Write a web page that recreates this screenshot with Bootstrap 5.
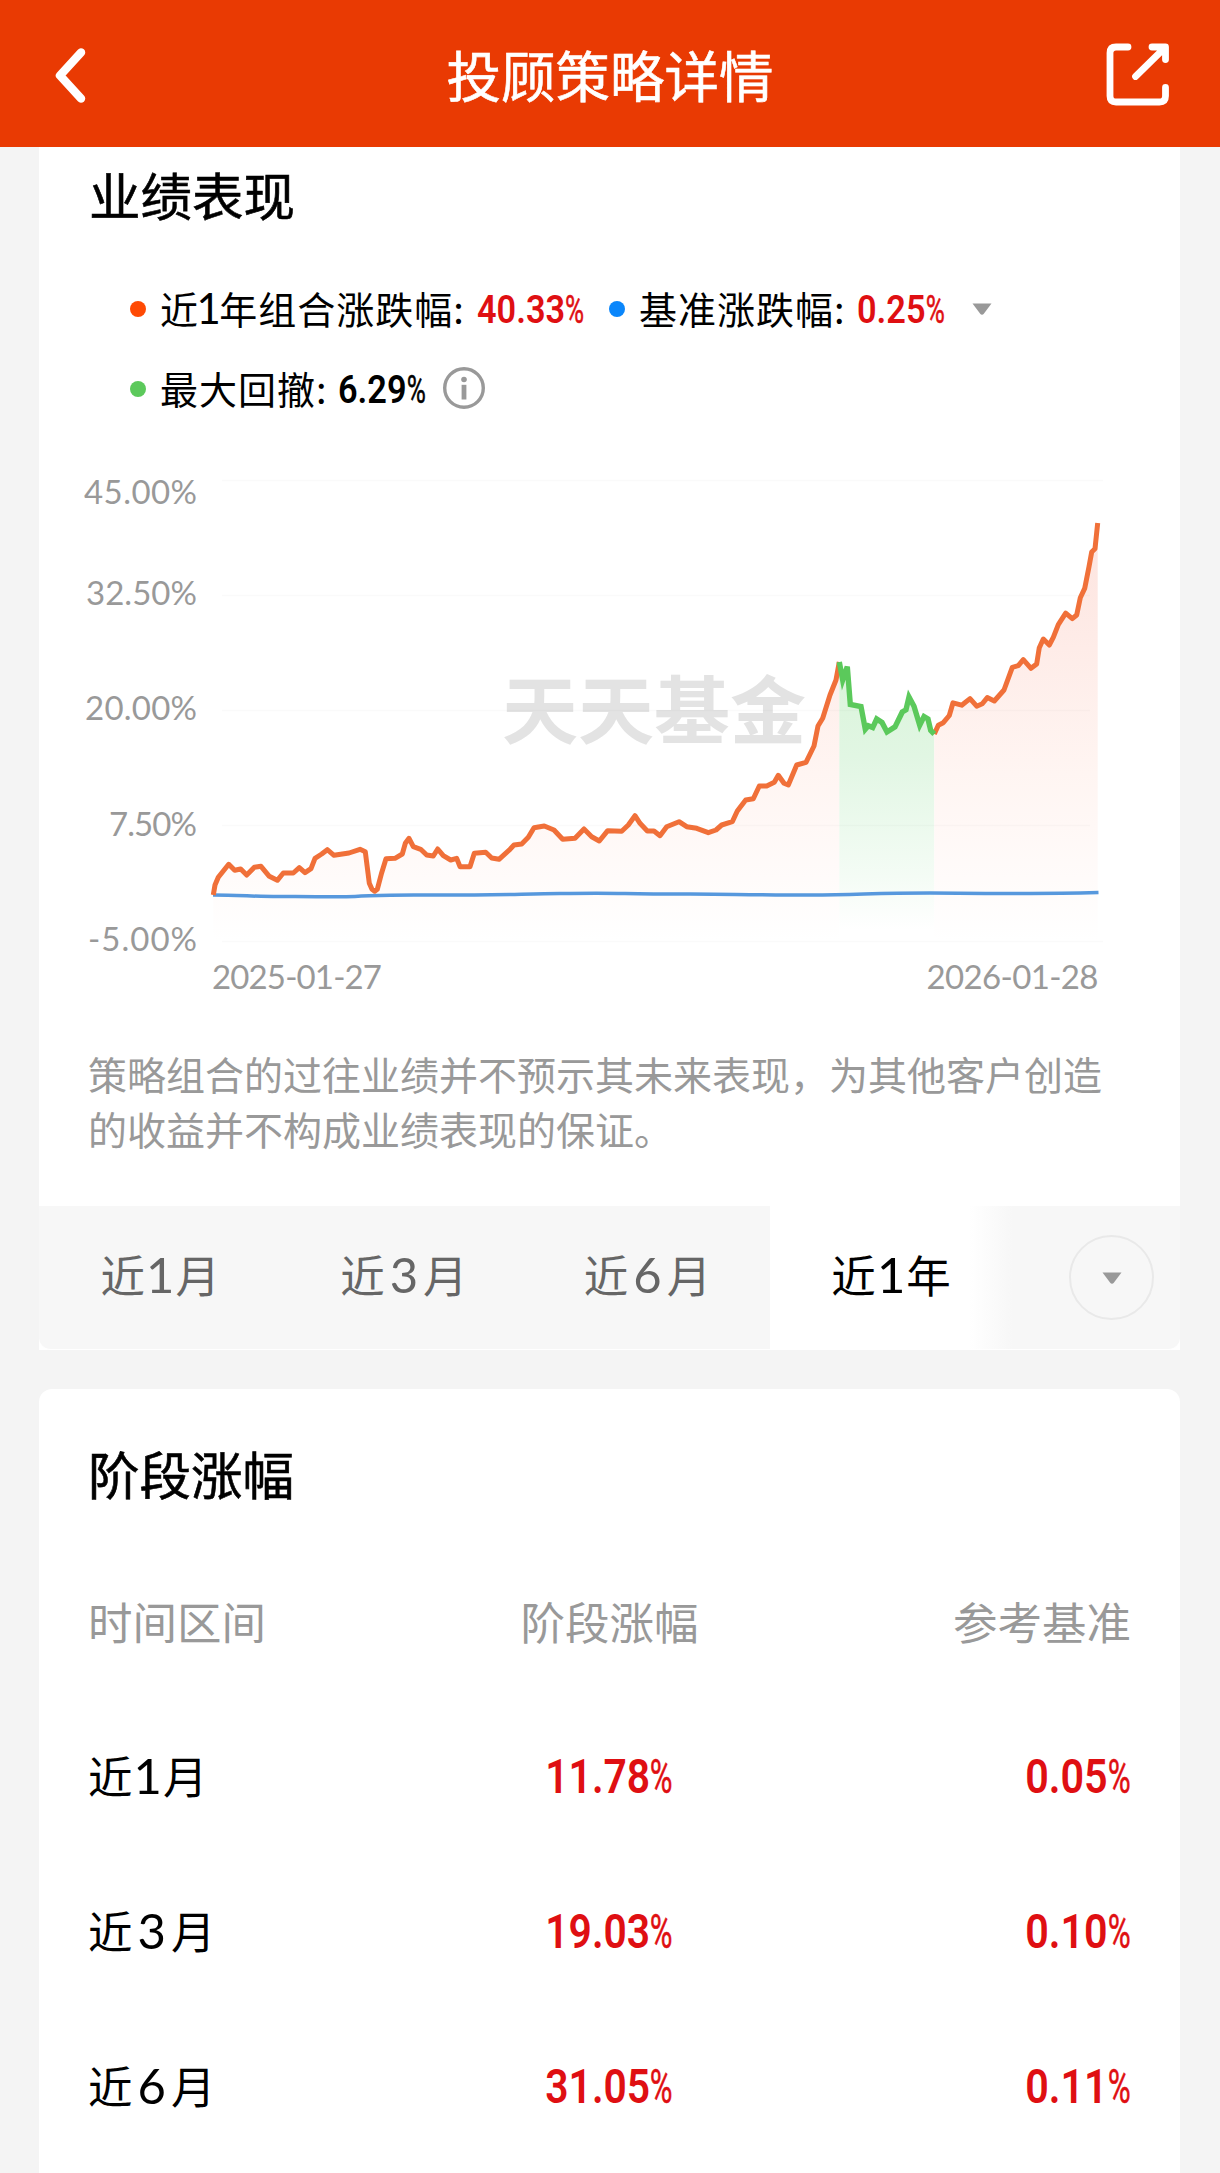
<!DOCTYPE html>
<html lang="zh-CN">
<head>
<meta charset="utf-8">
<meta name="viewport" content="width=device-width, initial-scale=1">
<title>投顾策略详情</title>
<link href="https://cdn.jsdelivr.net/npm/bootstrap@5.3.0/dist/css/bootstrap.min.css" rel="stylesheet">
<style>
body{background:#f4f4f4;color:#000;font-family:"Noto Sans CJK SC",sans-serif;width:1220px;height:2173px;overflow:hidden}
.topbar{height:147px;background:#e93a03;color:#fff;padding:0 50px 0 52px}
.topbar h1{font-size:54.5px;font-weight:400;line-height:60px;margin:0 0 0 4px;-webkit-text-stroke:.6px #fff}
.panel{margin:0 40px 0 39px;background:#fff;width:1141px}
.sect{font-size:51.5px;font-weight:400;line-height:60px;margin:0;-webkit-text-stroke:.6px #000}
.legend-row{height:80px;padding-left:91px;font-size:38px;line-height:50px;white-space:nowrap}
.dot{width:16px;height:16px;border-radius:50%;flex:none}
.lab{margin:-3px 1px 0 14px;letter-spacing:1px;flex:none}
.lab .one{padding:0;margin:0 -2.5px 0 -2.5px}
.num{font-family:Roboto,sans-serif;font-weight:600;color:#df0f12;display:inline-block;white-space:nowrap;flex:none}
.num .pct{font-weight:400;display:inline-block;transform:scaleX(.76);transform-origin:left;margin-right:-.17em;-webkit-text-stroke:.5px currentColor}
.legend-row .num{font-size:39px;transform:scaleX(.88);transform-origin:left;line-height:50px;padding-top:2px}
.note{font-size:39px;line-height:55px;color:#999;padding:0 38px 0 49px;height:160px;margin:-3px 0 0;white-space:nowrap}
.tabs{height:144px;background:#f7f7f7;border-bottom:1px solid #fff;border-radius:0 0 12px 12px;color:#666;font-size:44.5px;overflow:hidden}
.tabs .tab{width:243.6px;height:144px;flex:none;padding:0 1px 7px 0}
.tabs .tab.active{color:#000;background:linear-gradient(90deg,#fff 82%,#f7f7f7)}
.wide,.one{font-family:Lato,"Noto Sans CJK SC",sans-serif;font-size:1.1em;line-height:1}
.wide{padding:0 5px 0 5px}
.one{padding:0 1px 0 1px}
.more{width:85px;height:85px;border:2px solid #e9e9e9;border-radius:50%;margin-left:56px}
.stages{margin-top:39px;border-radius:13px 13px 0 0;height:786px;padding:54px 49px 0}
.grid-head{font-size:44.5px;color:#999;height:66px;margin-top:85px}
.grid-line{height:155px;font-size:44.5px}
.term{padding-bottom:1px}
.grid-line .num{font-size:48px;padding-top:3px}
.mid .num{transform:scaleX(.85)}
.end .num{transform:scaleX(.86);transform-origin:right}
.ax{font-family:Lato,sans-serif;font-size:33px;fill:#999}
</style>
<script src="https://cdn.jsdelivr.net/npm/bootstrap@5.3.0/dist/js/bootstrap.bundle.min.js"></script>
</head>
<body>
<header class="topbar d-flex align-items-center justify-content-between">
  <svg width="60" height="60" viewBox="52 44 60 60" fill="none" stroke="#fff" stroke-width="8.5" stroke-linecap="round" stroke-linejoin="round"><path d="M81 52.500 60 75.500 81 98.500"/></svg>
  <h1>投顾策略详情</h1>
  <svg width="66" height="66" viewBox="1104 42 66 66" fill="none" stroke="#fff" stroke-width="6.800" stroke-linecap="round" stroke-linejoin="round"><path d="M1128 48H1116Q1110 48 1110 54V97Q1110 103 1116 103H1159.500Q1165.500 103 1165.500 97V88.500M1152 48H1165.500V60.500M1135.500 77.500 1164 49.500"/></svg>
</header>

<main>
<section class="panel">
  <div style="height:122px;padding:17px 0 0 50px"><h2 class="sect">业绩表现</h2></div>
  <div class="legend-row d-flex align-items-center">
    <span class="dot" style="background:#ff4a04"></span><span class="lab" style="width:316px">近<span class="one">1</span>年组合涨跌幅:</span><span class="num" style="width:132px">40.33<span class="pct">%</span></span>
    <span class="dot" style="background:#0a86fb"></span><span class="lab" style="width:217px">基准涨跌幅:</span><span class="num" style="width:114px">0.25<span class="pct">%</span></span>
    <svg width="22" height="14" viewBox="0 0 22 14"><path d="M1.500 1.500H20.500L13 11.500Q11 14 9 11.500Z" fill="#999"/></svg>
  </div>
  <div class="legend-row d-flex align-items-center">
    <span class="dot" style="background:#5cc95b"></span><span class="lab" style="width:177px">最大回撤:</span><span class="num text-black" style="width:104px">6.29<span class="pct">%</span></span>
    <svg width="44" height="44" viewBox="0 1 44 44"><circle cx="22" cy="22" r="19.300" fill="none" stroke="#999" stroke-width="3.400"/><circle cx="22" cy="13.500" r="2.800" fill="#999"/><path d="M22 18.800V33.500" stroke="#999" stroke-width="4.800"/></svg>
  </div>
  <svg class="d-block" width="1141" height="620" viewBox="39 429 1141 620">
    <defs>
      <linearGradient id="warm" gradientUnits="userSpaceOnUse" x1="0" y1="523" x2="0" y2="941"><stop offset="0" stop-color="#fde3de"/><stop offset=".6" stop-color="#fff5f2"/><stop offset=".85" stop-color="#fffbfa"/><stop offset="1" stop-color="#fff"/></linearGradient>
      <linearGradient id="mint" gradientUnits="userSpaceOnUse" x1="0" y1="663" x2="0" y2="930"><stop offset="0" stop-color="#daf4da"/><stop offset=".35" stop-color="#e1f6e3"/><stop offset=".8" stop-color="#f4fcf5"/><stop offset="1" stop-color="#fff"/></linearGradient>
    </defs>
    <text x="502" y="738" textLength="304" lengthAdjust="spacingAndGlyphs" font-family="Noto Sans CJK SC" font-weight="700" font-size="74" fill="#e3e3e3">天天基金</text>
    <g id="areas"></g>
    <path d="M222 480.500H1103M222 595.500H1090M222 710.500H1090M222 825.500H1090M222 941.500H1103" stroke="#000" stroke-opacity=".02" stroke-width="1.500"/>
    <g fill="none" stroke-linejoin="round">
      <path d="M213 895C240 895 260 897 285 896.500S330 897.500 355 896.500 385 894.500 430 895 520 894 560 893.500 600 893 625 893.500 660 894 690 894 760 895 810 895 870 893 930 893 990 894 1030 893.500 1070 893.500 1098.500 892.500" stroke="#5798dd" stroke-width="3.500"/>
      <path id="rise" stroke="#f07039" stroke-width="5"/>
      <path id="rebound" stroke="#f07039" stroke-width="5"/>
      <path id="fall" stroke="#5bc95b" stroke-width="5.400" stroke-linejoin="miter"/>
    </g>
    <g class="ax" text-anchor="end">
      <text x="197" y="504" textLength="113">45.00%</text><text x="197" y="605" textLength="111">32.50%</text><text x="197" y="720" textLength="112">20.00%</text><text x="197" y="836" textLength="88">7.50%</text><text x="197" y="951" textLength="109">-5.00%</text>
      <text x="382" y="988.500" textLength="170">2025-01-27</text><text x="1098.500" y="988.500" textLength="172">2026-01-28</text>
    </g>
  </svg>
  <p class="note">策略组合的过往业绩并不预示其未来表现，为其他客户创造<br>的收益并不构成业绩表现的保证。</p>
  <nav class="tabs d-flex align-items-center">
    <div class="tab d-flex align-items-center justify-content-center">近<span class="one">1</span>月</div>
    <div class="tab d-flex align-items-center justify-content-center">近<span class="wide">3</span>月</div>
    <div class="tab d-flex align-items-center justify-content-center">近<span class="wide">6</span>月</div>
    <div class="tab active d-flex align-items-center justify-content-center">近<span class="one">1</span>年</div>
    <div class="more d-flex align-items-center justify-content-center"><svg width="22" height="14" viewBox="0 0 22 14"><path d="M1.500 1.500H20.500L13 11.500Q11 14 9 11.500Z" fill="#999"/></svg></div>
  </nav>
</section>

<section class="panel stages">
  <h2 class="sect">阶段涨幅</h2>
  <div class="grid-head row g-0 align-items-center"><div class="col-4">时间区间</div><div class="col-4 text-center">阶段涨幅</div><div class="col-4 text-end">参考基准</div></div>
  <div class="grid-line row g-0 align-items-center" style="margin-top:44px"><div class="col-4 term">近<span class="one">1</span>月</div><div class="col-4 text-center mid"><span class="num">11.78<span class="pct">%</span></span></div><div class="col-4 text-end end"><span class="num">0.05<span class="pct">%</span></span></div></div>
  <div class="grid-line row g-0 align-items-center"><div class="col-4 term">近<span class="wide">3</span>月</div><div class="col-4 text-center mid"><span class="num">19.03<span class="pct">%</span></span></div><div class="col-4 text-end end"><span class="num">0.10<span class="pct">%</span></span></div></div>
  <div class="grid-line row g-0 align-items-center"><div class="col-4 term">近<span class="wide">6</span>月</div><div class="col-4 text-center mid"><span class="num">31.05<span class="pct">%</span></span></div><div class="col-4 text-end end"><span class="num">0.11<span class="pct">%</span></span></div></div>
</section>
</main>
<script>
// Series in chart units, split where the drawdown starts and ends
const series = {
  rise: "213.3,895 215,885 218.3,877.3 223.3,871 228.7,864.3 234.7,870.3 240.7,869 246.7,875 254.3,867.3 261,866.3 269.3,876.3 277.3,880.3 283.3,873 293.3,873 299.3,867.7 305,872.7 311,868.7 315,858.3 321.7,854 327.3,849.7 334,855.3 349,853 360,849.3 365.3,851.7 369.3,883.3 372,889.3 374.7,891.3 377.3,889.3 381.7,872.7 386,858.7 395,858.3 402.3,854 405.3,843.3 409,838.3 413.3,846.7 420.7,849.3 426.7,855 433.3,856 437.7,849 443.3,855.7 450.7,860 456.7,858.3 460,866.7 470,866.7 474.3,853.3 485.7,852.3 491.7,858 499,859.3 510,849.3 514,845 521.7,844 528.3,837.3 534,827.7 544.3,826 554,830 562.7,839.3 575,838.3 584,829 591.7,836.7 599.3,841 607.7,830.7 621.7,831.3 628.3,825 635,815.7 640,823.3 647.3,831 654,831 660,835.7 666.7,826.7 679,821.7 686.7,826.7 696.7,828.3 708.3,832.7 716,830 721.7,825 732.3,821.7 737.3,811 745.7,800 753.3,798.7 759.3,786 766.7,786 774.3,782.3 778.3,775.3 784,783.3 788.3,785 796.7,765 806,762.3 814,746 818,726 822.7,718.3 830,695 836,680 839.3,662",
  fall: "839.3,662 842.7,680 847.3,666.6 850.3,704.5 861,706.500 865.3,729.3 868.3,725.8 872.7,727.6 876.7,719 882,722.4 887,732 895,726.9 902.3,712 906,709.7 909,697 914,706.2 919.7,725.1 924,716.5 928,719 930.7,730.3 934.3,734",
  rebound: "934.3,734 938.3,725.2 943.3,722.7 949.3,715.5 953,702.8 961.7,705.2 970,698.6 976.7,706.2 982.3,703.8 987.3,697.6 994.3,701 1004,690 1012.3,667.3 1018.3,665.6 1023.3,659.7 1031,668.3 1036.7,663.9 1039.3,647.7 1043.3,639 1049.3,645 1053.3,637.3 1058.3,624.6 1065.7,613.2 1072.3,618.7 1076.7,615 1080.3,597.7 1084.7,588.4 1089,566.7 1091.7,552 1095,548.8 1097.7,523"
};
let areas = "";
for (const [id, pts] of Object.entries(series)) {
  document.getElementById(id).setAttribute("d", "M" + pts);
  const p = pts.split(" "), x0 = p[0].split(",")[0], x1 = p[p.length - 1].split(",")[0];
  areas += `<path d="M${x0} 941L${pts}L${x1} 941Z" fill="url(#${id === "fall" ? "mint" : "warm"})"/>`;
}
document.getElementById("areas").innerHTML = areas;
</script>
</body>
</html>
